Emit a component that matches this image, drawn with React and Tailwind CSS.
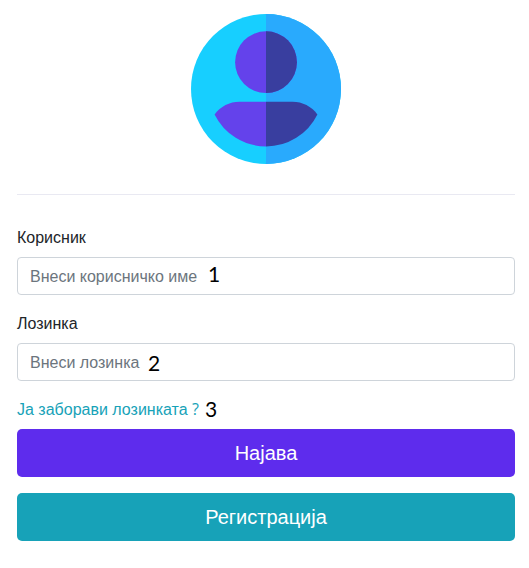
function Avatar() {
  return (
    <svg className="block h-[150px] w-[150px]" viewBox="0 0 150 150" aria-hidden="true">
      <circle cx="75" cy="75" r="75" fill="#17cfff" />
      <path d="M75 0a75 75 0 0 1 0 150z" fill="#29aafd" />
      <circle cx="75" cy="48.2" r="30.9" fill="#6442eb" />
      <path d="M75 17.3a30.9 30.9 0 0 1 0 61.8z" fill="#393e9f" />
      <path d="M75 87.8H48.5C38.5 87.8 29.5 92.5 23.6 100.4A57.4 57.4 0 0 0 75 132.4z" fill="#6442eb" />
      <path d="M75 87.8h26.5c10 0 19 4.7 24.9 12.6A57.4 57.4 0 0 1 75 132.4z" fill="#393e9f" />
    </svg>
  );
}

function Marker({ className, children }) {
  return (
    <span className={`absolute font-[Lato,sans-serif] text-[21px] leading-6 text-black ${className}`}>
      {children}
    </span>
  );
}

function Field({ id, label, type, placeholder, marker }) {
  return (
    <div className="relative mb-[17px]">
      <label htmlFor={id} className="mb-[7px] block text-[#212529]">
        {label}
      </label>
      <input
        id={id}
        type={type}
        placeholder={placeholder}
        className="block h-[38px] w-full rounded border border-[#ced4da] bg-white px-3 pt-[7px] pb-[5px] placeholder:text-[#6c757d] placeholder:opacity-100"
      />
      {marker}
    </div>
  );
}

export default function App() {
  return (
    <main className="h-[568px] w-full bg-white pt-3.5 pr-3.5 pl-[17px] font-['Liberation_Sans',Arial,sans-serif] text-base leading-6">
      <div className="flex justify-center">
        <Avatar />
      </div>
      <hr className="mt-[30px] mb-[31px] border-[#e9e9f2]" />
      <form>
        <Field
          id="username"
          label="Корисник"
          type="text"
          placeholder="Внеси корисничко име"
          marker={<Marker className="top-[36px] left-[191px]">1</Marker>}
        />
        <Field
          id="password"
          label="Лозинка"
          type="password"
          placeholder="Внеси лозинка"
          marker={<Marker className="top-[39px] left-[131px]">2</Marker>}
        />
        <div className="relative h-[31px]">
          <a href="#" className="block text-[#17a2b8]">
            Ја заборави лозинката <span className="font-['Open_Sans',sans-serif] leading-none">?</span>
          </a>
          <Marker className="-top-px left-[188px]">3</Marker>
        </div>
        <button type="button" className="mb-4 block h-12 w-full rounded-[5px] bg-[#5e2ced] text-xl text-white">
          Најава
        </button>
        <button type="button" className="block h-12 w-full rounded-[5px] bg-[#17a2b8] text-xl text-white">
          Регистрација
        </button>
      </form>
    </main>
  );
}
